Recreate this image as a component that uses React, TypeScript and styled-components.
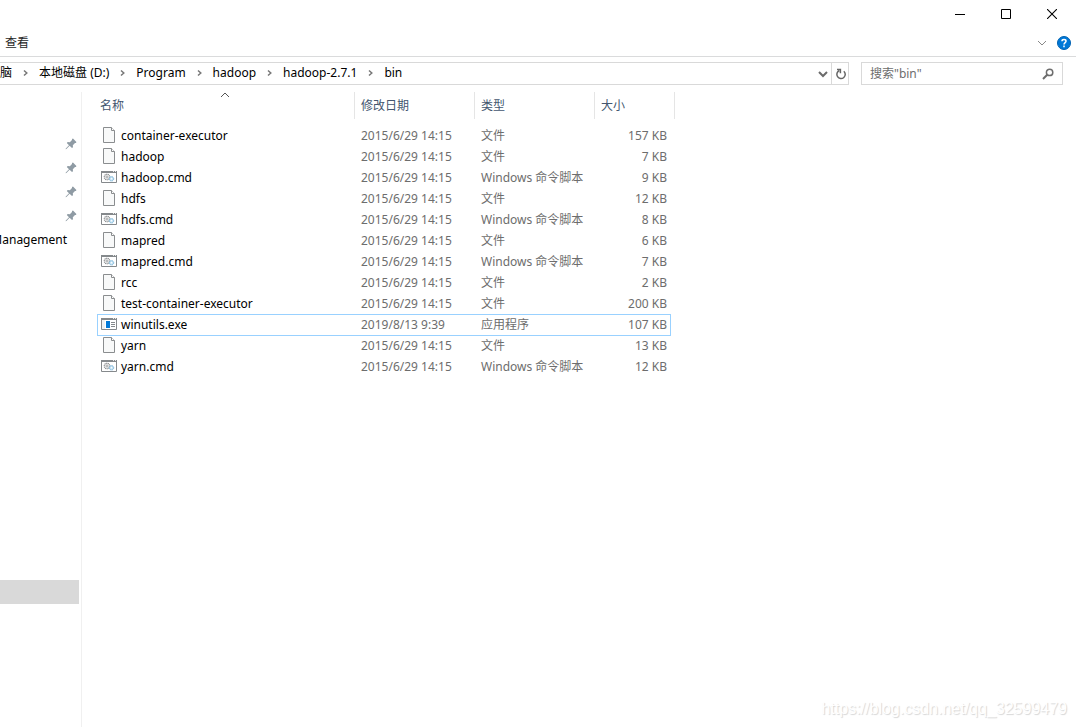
import React from 'react';
import styled, { createGlobalStyle } from 'styled-components';

const GlobalStyle = createGlobalStyle`
  *, *::after { box-sizing: border-box; }
  body {
    margin: 0;
    background: #fff;
    color: #000;
    font: 12px/20px "Noto Sans", "Noto Sans CJK SC", sans-serif;
  }
  button, input { font: inherit; color: inherit; }
`;

const Window = styled.div`
  position: relative;
  display: flex;
  flex-direction: column;
  min-height: 100vh;
  overflow: hidden;
`;

const PlainButton = styled.button`
  display: flex;
  align-items: center;
  justify-content: center;
  padding: 0;
  border: 0;
  background: transparent;
`;

const TitleBar = styled.header`
  display: flex;
  justify-content: flex-end;
  height: 28px;
  padding-right: 1px;
`;

const CaptionButton = styled(PlainButton)`
  width: 46px;
  &:hover { background: #e5e5e5; }
`;

const RibbonTabs = styled.div`
  display: flex;
  align-items: center;
  justify-content: space-between;
  height: 29px;
  padding: 2px 5px 0;
  border-bottom: 1px solid #dadbdc;
`;

const RibbonTab = styled(PlainButton)`
  color: #262626;
`;

const RibbonTools = styled.div`
  display: flex;
  align-items: center;
  gap: 10px;
`;

const NavigationRow = styled.div`
  display: flex;
  gap: 12px;
  padding: 5px 13px 7px 0;
`;

const AddressBar = styled.div`
  display: flex;
  flex: 1;
  min-width: 0;
  height: 23px;
  border: 1px solid #d9d9d9;
  border-left: 0;
`;

const Breadcrumb = styled.nav`
  display: flex;
  flex: 1;
  align-items: center;
  min-width: 0;
  margin-left: -12px;
  padding-bottom: 1px;
  overflow: hidden;
  white-space: nowrap;
`;

const Crumb = styled.a`
  color: #000;
  text-decoration: none;
`;

const CrumbSeparator = styled.span`
  display: flex;
  flex: none;
  justify-content: center;
  width: 27px;
`;

const AddressButton = styled(PlainButton)<{ $divided?: boolean }>`
  width: 17px;
  padding-left: 1px;
  border-left: ${p => (p.$divided ? '1px solid #d9d9d9' : '0')};
`;

const SearchBox = styled.form`
  display: flex;
  width: 202px;
  height: 23px;
  border: 1px solid #d9d9d9;
`;

const SearchInput = styled.input`
  flex: 1;
  min-width: 0;
  padding: 0 0 0 8px;
  border: 0;
  outline: 0;
  background: transparent;
  &::placeholder { color: #6d6d6d; opacity: 1; }
`;

const SearchButton = styled(PlainButton)`
  width: 28px;
`;

const Body = styled.div`
  display: flex;
  flex: 1;
`;

const Sidebar = styled.aside`
  flex: none;
  width: 82px;
  padding: 40px 2px 0 0;
  border-right: 1px solid #f0f0f0;
`;

const TreeItem = styled.div<{ $selected?: boolean }>`
  display: flex;
  align-items: center;
  justify-content: flex-end;
  height: 24px;
  padding-right: ${p => (p.$selected ? '0' : '2px')};
  background: ${p => (p.$selected ? '#d9d9d9' : 'transparent')};
  overflow: hidden;
`;

const TreeLabel = styled.span`
  padding-right: 10px;
`;

const TreeSpace = styled.div`
  height: 328px;
`;

const FilePane = styled.main`
  flex: 1;
  min-width: 0;
  padding-left: 15px;
`;

const FileTable = styled.table`
  width: 578px;
  table-layout: fixed;
  border-collapse: collapse;
  border-spacing: 0;
`;

const HeadCell = styled.th`
  height: 33px;
  padding: 0;
  vertical-align: top;
  font-weight: normal;
`;

const HeadButton = styled(PlainButton)<{ $first?: boolean }>`
  position: relative;
  justify-content: flex-start;
  width: 100%;
  height: 27px;
  padding-left: ${p => (p.$first ? '3px' : '6px')};
  border-right: 1px solid #e5e5e5;
  color: #43566f;
`;

const SortMark = styled.svg`
  position: absolute;
  top: 0;
  left: 50%;
  margin-left: -6px;
`;

const FileRow = styled.tr<{ $focused?: boolean }>`
  position: relative;
  height: 21px;
  &::after {
    content: '';
    display: ${p => (p.$focused ? 'block' : 'none')};
    position: absolute;
    inset: 0 4px -1px 0;
    border: 1px solid #99d1ff;
  }
`;

const Cell = styled.td<{ $right?: boolean }>`
  padding: 0 ${p => (p.$right ? '8px' : '0')} 0 6px;
  color: #6d6d6d;
  text-align: ${p => (p.$right ? 'right' : 'left')};
  white-space: nowrap;
`;

const NameCell = styled(Cell)`
  padding-left: 4px;
  color: #000;
`;

const FileName = styled.span`
  display: flex;
  align-items: flex-start;
  gap: 4px;
`;

const Watermark = styled.div`
  position: absolute;
  right: 9px;
  bottom: 8px;
  color: #fff;
  font: 16px/20px "Liberation Sans", sans-serif;
  text-shadow: 1px 1px 1px #d6d6d6;
`;

const PinIcon = () => (
  <svg width="12" height="12" viewBox="0 0 12 12" fill="#8f9ba4" aria-hidden="true">
    <path d="M7 1 8 .6 11.4 4 11 5 10 5 7.8 7.2 8 9.2 7 10 4.6 7.8 1.4 11 .6 11.2 .8 10.4 4 7.2 1.8 5 2.7 4 4.8 4.2 7 2Z" />
  </svg>
);

const Chevron = ({ color = '#6b6b6b', width = 1 }: { color?: string; width?: number }) => (
  <svg width="10" height="8" viewBox="0 0 10 8" fill="none" stroke={color} strokeWidth={width} aria-hidden="true">
    <path d="M1 2 5 6 9 2" />
  </svg>
);

type Kind = 'file' | 'cmd' | 'exe';

const FileIcon = ({ kind }: { kind: Kind }) => {
  if (kind === 'file') {
    return (
      <svg width="16" height="18" viewBox="0 -1 16 18" aria-hidden="true">
        <path d="M2.5.5h8l3 3v12h-11Z" fill="#f8f9f9" stroke="#8a8d8f" />
        <path d="M10.5.5v3h3" fill="#fff" stroke="#8a8d8f" />
      </svg>
    );
  }
  return (
    <svg width="16" height="18" viewBox="0 -1 16 18" aria-hidden="true">
      <path d="M.5 2.5h15v11H.5Z" fill="#fff" stroke="#85898c" />
      <path d="M0 2h16v2H0Z" fill="#85898c" />
      <path d="M12 2h1v1h-1ZM14 2h1v1h-1Z" fill="#e8eaeb" />
      {kind === 'cmd' ? (
        <g fill="none">
          <circle cx="6" cy="8" r="2.8" fill="#eceded" stroke="#8a8d8f" strokeWidth="1.1" strokeDasharray="1.2 .5" />
          <circle cx="6" cy="8" r="1" fill="#fff" stroke="#8a8d8f" strokeWidth=".7" />
          <circle cx="10.5" cy="9.8" r="2.2" fill="#c3e1f3" stroke="#7db6d8" strokeDasharray="1.2 .4" />
          <circle cx="10.5" cy="9.8" r=".8" fill="#fff" />
        </g>
      ) : (
        <>
          <path d="M1 4h3v9H1Z" fill="#eff1f2" />
          <path d="M5 5h4v7H5Z" fill="#0078d7" />
          <path d="M10 6.5h4M10 8.5h4M10 10.5h4" stroke="#85898c" />
        </>
      )}
    </svg>
  );
};

const crumbs = ['电脑', '本地磁盘 (D:)', 'Program', 'hadoop', 'hadoop-2.7.1', 'bin'];
const columns = ['名称', '修改日期', '类型', '大小'];

const typeNames: Record<Kind, string> = {
  file: '文件',
  cmd: 'Windows 命令脚本',
  exe: '应用程序',
};

const files: { name: string; kind: Kind; size: string; date?: string; focused?: boolean }[] = [
  { name: 'container-executor', kind: 'file', size: '157 KB' },
  { name: 'hadoop', kind: 'file', size: '7 KB' },
  { name: 'hadoop.cmd', kind: 'cmd', size: '9 KB' },
  { name: 'hdfs', kind: 'file', size: '12 KB' },
  { name: 'hdfs.cmd', kind: 'cmd', size: '8 KB' },
  { name: 'mapred', kind: 'file', size: '6 KB' },
  { name: 'mapred.cmd', kind: 'cmd', size: '7 KB' },
  { name: 'rcc', kind: 'file', size: '2 KB' },
  { name: 'test-container-executor', kind: 'file', size: '200 KB' },
  { name: 'winutils.exe', kind: 'exe', size: '107 KB', date: '2019/8/13 9:39', focused: true },
  { name: 'yarn', kind: 'file', size: '13 KB' },
  { name: 'yarn.cmd', kind: 'cmd', size: '12 KB' },
];

export default function App() {
  return (
    <Window>
      <GlobalStyle />
      <TitleBar>
        <CaptionButton aria-label="最小化">
          <svg width="10" height="10" viewBox="0 0 10 10" stroke="#000"><path d="M0 5.5h10" /></svg>
        </CaptionButton>
        <CaptionButton aria-label="最大化">
          <svg width="10" height="10" viewBox="0 0 10 10" fill="none" stroke="#000"><path d="M.5.5h9v9h-9Z" /></svg>
        </CaptionButton>
        <CaptionButton aria-label="关闭">
          <svg width="10" height="10" viewBox="0 0 10 10" fill="none" stroke="#000" strokeWidth="1.1"><path d="M0 0l10 10M10 0L0 10" /></svg>
        </CaptionButton>
      </TitleBar>

      <RibbonTabs>
        <RibbonTab>查看</RibbonTab>
        <RibbonTools>
          <PlainButton aria-label="展开功能区"><Chevron color="#888" /></PlainButton>
          <PlainButton aria-label="帮助">
            <svg width="14" height="14" viewBox="0 0 14 14" fill="none">
              <circle cx="7" cy="7" r="6.5" fill="#0078d7" stroke="#0062b1" />
              <path d="M5 5.2C5 3 9 3 9 5.2 9 6.6 7 6.6 7 8.4M7 9.6v1.6" stroke="#fff" strokeWidth="1.5" />
            </svg>
          </PlainButton>
        </RibbonTools>
      </RibbonTabs>

      <NavigationRow>
        <AddressBar>
          <Breadcrumb>
            {crumbs.map((crumb, i) => (
              <React.Fragment key={crumb}>
                {i > 0 && (
                  <CrumbSeparator>
                    <svg width="5" height="8" viewBox="0 0 5 8" fill="none" stroke="#777" strokeWidth="1.5"><path d="M1 1.5 3.8 4 1 6.5" /></svg>
                  </CrumbSeparator>
                )}
                <Crumb href="#">{crumb}</Crumb>
              </React.Fragment>
            ))}
          </Breadcrumb>
          <AddressButton aria-label="以前的位置"><Chevron width={2} /></AddressButton>
          <AddressButton aria-label="刷新" $divided>
            <svg width="12" height="12" viewBox="0 0 12 12" fill="none" stroke="#666" strokeWidth="1.5">
              <path d="M8.8 3.2A4.2 4.2 0 1 1 4.2 2.6M2 1.6h3.4v3.6" />
            </svg>
          </AddressButton>
        </AddressBar>
        <SearchBox onSubmit={e => e.preventDefault()}>
          <SearchInput aria-label="搜索" placeholder={'搜索"bin"'} />
          <SearchButton aria-label="开始搜索">
            <svg width="12" height="12" viewBox="0 0 12 12" fill="none" stroke="#6d6d6d">
              <circle cx="7.6" cy="4.4" r="3.2" strokeWidth="1.5" />
              <path d="M5.2 6.8 1 11" strokeWidth="2" />
            </svg>
          </SearchButton>
        </SearchBox>
      </NavigationRow>

      <Body>
        <Sidebar>
          {[0, 1, 2, 3].map(n => (
            <TreeItem key={n}><PinIcon /></TreeItem>
          ))}
          <TreeItem><TreeLabel>Management</TreeLabel></TreeItem>
          <TreeSpace />
          <TreeItem $selected />
        </Sidebar>

        <FilePane>
          <FileTable>
            <colgroup>
              <col style={{ width: 258 }} />
              <col style={{ width: 120 }} />
              <col style={{ width: 120 }} />
              <col style={{ width: 80 }} />
            </colgroup>
            <thead>
              <tr>
                {columns.map((column, i) => (
                  <HeadCell key={column} scope="col">
                    <HeadButton $first={i === 0}>
                      {column}
                      {i === 0 && (
                        <SortMark width="10" height="6" viewBox="0 0 10 6" fill="none" stroke="#555">
                          <path d="M1 5 5 1 9 5" />
                        </SortMark>
                      )}
                    </HeadButton>
                  </HeadCell>
                ))}
              </tr>
            </thead>
            <tbody>
              {files.map(file => (
                <FileRow key={file.name} $focused={file.focused}>
                  <NameCell><FileName><FileIcon kind={file.kind} />{file.name}</FileName></NameCell>
                  <Cell>{file.date ?? '2015/6/29 14:15'}</Cell>
                  <Cell>{typeNames[file.kind]}</Cell>
                  <Cell $right>{file.size}</Cell>
                </FileRow>
              ))}
            </tbody>
          </FileTable>
        </FilePane>
      </Body>
      <Watermark>https://blog.csdn.net/qq_32599479</Watermark>
    </Window>
  );
}
